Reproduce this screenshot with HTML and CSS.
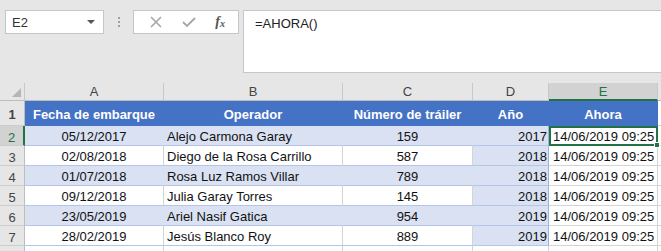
FILE: index.html
```html
<!DOCTYPE html>
<html lang="es">
<head>
    <meta charset="UTF-8">
    <meta name="viewport" content="width=device-width, initial-scale=1.0">
    <title>AHORA</title>
    <link rel="stylesheet" href="styles.css">
</head>
<body>
    <div class="toolbar">
        <div class="namebox">
            <span>E2</span>
            <span class="caret"></span>
        </div>
        <div class="grip"><i></i><i></i><i></i></div>
        <div class="buttons">
            <svg width="14" height="14" viewBox="0 0 14 14"><path d="M2 2 L12 12 M12 2 L2 12" stroke="#a6a6a6" stroke-width="1.6" fill="none"/></svg>
            <svg width="16" height="14" viewBox="0 0 16 14"><path d="M2 7 L6 11 L14 3" stroke="#a6a6a6" stroke-width="1.8" fill="none"/></svg>
            <span class="fx">f<sub>x</sub></span>
        </div>
        <div class="formula">=AHORA()</div>
    </div>

    <div class="sheet">
        <div class="row colhead">
            <div class="corner"><span class="tri"></span></div>
            <div>A</div><div>B</div><div>C</div><div>D</div><div class="sel">E</div><div></div>
        </div>
        <div class="row thead">
            <div class="num">1</div>
            <div>Fecha de embarque</div>
            <div>Operador</div>
            <div>Número de tráiler</div>
            <div>Año</div>
            <div>Ahora</div>
            <div class="blank"></div>
        </div>
        <div class="row band">
            <div class="num cur">2</div>
            <div class="c">05/12/2017</div>
            <div>Alejo Carmona Garay</div>
            <div class="c">159</div>
            <div class="yr">2017</div>
            <div class="now active">14/06/2019 09:25<span class="handle"></span></div>
            <div class="blank"></div>
        </div>
        <div class="row">
            <div class="num">3</div>
            <div class="c">02/08/2018</div>
            <div>Diego de la Rosa Carrillo</div>
            <div class="c">587</div>
            <div class="yr">2018</div>
            <div class="now">14/06/2019 09:25</div>
            <div class="blank"></div>
        </div>
        <div class="row band">
            <div class="num">4</div>
            <div class="c">01/07/2018</div>
            <div>Rosa Luz Ramos Villar</div>
            <div class="c">789</div>
            <div class="yr">2018</div>
            <div class="now">14/06/2019 09:25</div>
            <div class="blank"></div>
        </div>
        <div class="row">
            <div class="num">5</div>
            <div class="c">09/12/2018</div>
            <div>Julia Garay Torres</div>
            <div class="c">145</div>
            <div class="yr">2018</div>
            <div class="now">14/06/2019 09:25</div>
            <div class="blank"></div>
        </div>
        <div class="row band">
            <div class="num">6</div>
            <div class="c">23/05/2019</div>
            <div>Ariel Nasif Gatica</div>
            <div class="c">954</div>
            <div class="yr">2019</div>
            <div class="now">14/06/2019 09:25</div>
            <div class="blank"></div>
        </div>
        <div class="row">
            <div class="num">7</div>
            <div class="c">28/02/2019</div>
            <div>Jesús Blanco Roy</div>
            <div class="c">889</div>
            <div class="yr">2019</div>
            <div class="now">14/06/2019 09:25</div>
            <div class="blank"></div>
        </div>
        <div class="row empty">
            <div class="num"></div>
            <div></div><div></div><div></div><div></div><div></div><div></div>
        </div>
    </div>
</body>
</html>
```

FILE: styles.css
```css
*{
    margin: 0;
    padding: 0;
    box-sizing: border-box;
}

body{
    background-color: #e6e6e6;
    font-family: "Liberation Sans", Arial, sans-serif;
    font-size: 13px;
    color: #111;
    overflow: hidden;
}

/* barra de fórmulas */
.toolbar{
    display: flex;
    align-items: flex-start;
    padding: 10px 0 0 5px;
    height: 83px;
}
.namebox{
    width: 99px;
    height: 24px;
    background: #fff;
    border: 1px solid #c6c6c6;
    display: flex;
    align-items: center;
    justify-content: space-between;
    padding: 0 8px 0 6px;
    color: #333;
}
.caret{
    width: 0;
    height: 0;
    border-left: 4px solid transparent;
    border-right: 4px solid transparent;
    border-top: 4px solid #555;
}
.grip{
    width: 29px;
    height: 24px;
    display: flex;
    flex-direction: column;
    align-items: center;
    justify-content: center;
    gap: 2px;
}
.grip i{
    width: 2px;
    height: 2px;
    background: #a0a0a0;
}
.buttons{
    width: 106px;
    height: 24px;
    background: #fff;
    border: 1px solid #c6c6c6;
    display: flex;
    align-items: center;
    justify-content: space-around;
    padding: 0 4px 0 6px;
}
.fx{
    font-family: "Liberation Serif", serif;
    font-style: italic;
    font-weight: bold;
    font-size: 14px;
    color: #555;
}
.fx sub{
    font-size: 10px;
    vertical-align: -1px;
}
.formula{
    flex: 1;
    height: 63px;
    margin-left: 4px;
    background: #fff;
    border: 1px solid #c6c6c6;
    border-right: none;
    padding: 5px 0 0 11px;
    color: #222;
}

/* hoja */
.row{
    display: grid;
    grid-template-columns: 25px 139px 179px 130px 76px 109px 10px;
    height: 20px;
}
.row > div{
    display: flex;
    align-items: center;
    white-space: nowrap;
    overflow: hidden;
    padding: 2px 3px 0;
    background: #fff;
    border-right: 1px solid #d4d4d4;
    border-bottom: 1px solid #d4d4d4;
}

.colhead{
    height: 18px;
}
.colhead > div{
    background: #e6e6e6;
    justify-content: center;
    color: #444;
    padding-top: 0;
    border-right: 1px solid #c8c8c8;
    border-bottom: 1px solid #bdbdbd;
}
.colhead > div.sel{
    background: #d2d2d2;
    color: #217346;
    border-bottom: 2px solid #217346;
}
.corner{
    position: relative;
}
.tri{
    position: absolute;
    right: 3px;
    bottom: 3px;
    width: 0;
    height: 0;
    border-left: 9px solid transparent;
    border-bottom: 9px solid #b5b5b5;
}

.row > div.num{
    background: #e6e6e6;
    justify-content: center;
    color: #444;
    border-right: 1px solid #bdbdbd;
    border-bottom: 1px solid #cdcdcd;
    padding: 3px 0 0;
}
.row > div.num.cur{
    color: #217346;
    background: #d2d2d2;
    border-right: 2px solid #217346;
}

.thead{
    height: 25px;
}
.thead > div{
    background: #4472c4;
    color: #fff;
    font-weight: bold;
    justify-content: center;
    border-right-color: #4472c4;
    border-bottom-color: #4472c4;
    padding-top: 3px;
}
.thead > div.blank{
    background: #fff;
    border-bottom-color: #d4d4d4;
}

.row > div.c{
    justify-content: center;
}
.row:not(.thead):not(.colhead) > div:nth-child(2),
.row:not(.thead):not(.colhead) > div:nth-child(3),
.row:not(.thead):not(.colhead) > div:nth-child(4){
    border-bottom-color: #b4c6e7;
}
.band > div:nth-child(2),
.band > div:nth-child(3),
.band > div:nth-child(4){
    background: #d9e1f2;
    border-right-color: #d9e1f2;
}
.row > div.yr{
    background: #d9e1f2;
    justify-content: flex-end;
    padding-right: 1px;
    border-right-color: #9bb3de;
    border-bottom-color: #b4c6e7;
}
.row > div.now{
    padding-left: 4px;
}
.row > div.active{
    position: relative;
    overflow: visible;
    outline: 2px solid #217346;
    outline-offset: -2px;
}
.handle{
    position: absolute;
    right: -3px;
    bottom: -3px;
    width: 6px;
    height: 6px;
    background: #217346;
    border: 1px solid #fff;
}
.empty > div{
    border-bottom: none;
}
```
